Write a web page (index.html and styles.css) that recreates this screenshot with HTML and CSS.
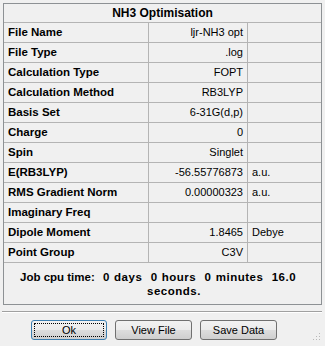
FILE: index.html
```html
<!DOCTYPE html>
<html>
<head>
<meta charset="utf-8">
<link rel="stylesheet" href="styles.css">
</head>
<body>
<div class="window">
  <div class="panel">
    <div class="title">NH3 Optimisation</div>
    <div class="row"><div class="label">File Name</div><div class="value">ljr-NH3 opt</div><div class="unit"></div></div>
    <div class="row"><div class="label">File Type</div><div class="value">.log</div><div class="unit"></div></div>
    <div class="row"><div class="label">Calculation Type</div><div class="value">FOPT</div><div class="unit"></div></div>
    <div class="row"><div class="label">Calculation Method</div><div class="value">RB3LYP</div><div class="unit"></div></div>
    <div class="row"><div class="label">Basis Set</div><div class="value">6-31G(d,p)</div><div class="unit"></div></div>
    <div class="row"><div class="label">Charge</div><div class="value">0</div><div class="unit"></div></div>
    <div class="row"><div class="label">Spin</div><div class="value">Singlet</div><div class="unit"></div></div>
    <div class="row"><div class="label">E(RB3LYP)</div><div class="value">-56.55776873</div><div class="unit">a.u.</div></div>
    <div class="row"><div class="label">RMS Gradient Norm</div><div class="value">0.00000323</div><div class="unit">a.u.</div></div>
    <div class="row"><div class="label">Imaginary Freq</div><div class="value"></div><div class="unit"></div></div>
    <div class="row"><div class="label">Dipole Moment</div><div class="value">1.8465</div><div class="unit">Debye</div></div>
    <div class="row"><div class="label">Point Group</div><div class="value">C3V</div><div class="unit"></div></div>
    <div class="cpu">
      <div class="cpu-label">Job cpu time:</div>
      <div class="cpu-value">
        <div class="cpu-line">0 days  0 hours  0 minutes  16.0</div>
        <div class="cpu-line second">seconds.</div>
      </div>
    </div>
  </div>
  <div class="separator"></div>
  <div class="buttons">
    <button class="btn default"><span class="focus">Ok</span></button>
    <button class="btn">View File</button>
    <button class="btn">Save Data</button>
  </div>
  <svg class="grip" width="8" height="8" viewBox="0 0 8 8">
    <rect x="6" y="0" width="1" height="1" fill="#b8b8b8"/>
    <rect x="3" y="3" width="1" height="1" fill="#b8b8b8"/>
    <rect x="6" y="3" width="1" height="1" fill="#b8b8b8"/>
    <rect x="0" y="6" width="1" height="1" fill="#b8b8b8"/>
    <rect x="3" y="6" width="1" height="1" fill="#b8b8b8"/>
    <rect x="6" y="6" width="1" height="1" fill="#b8b8b8"/>
  </svg>
</div>
</body>
</html>
```
FILE: styles.css
```css
html, body {
  margin: 0;
  padding: 0;
  background: #f0f0f0;
}
body {
  font-family: "Liberation Sans", Arial, sans-serif;
  font-size: 11px;
  color: #000;
}
.window {
  position: relative;
  width: 325px;
  height: 346px;
  padding-top: 3px;
  box-sizing: border-box;
}
.panel {
  margin-left: 3px;
  width: 319px;
  border: 1px solid #8d9194;
  box-sizing: border-box;
}
.title {
  height: 18px;
  line-height: 18px;
  text-align: center;
  font-weight: bold;
  font-size: 12px;
  border-bottom: 1px solid #b4b4b4;
}
.row {
  display: flex;
  height: 20px;
  border-bottom: 1px solid #b4b4b4;
  box-sizing: border-box;
  line-height: 19px;
}
.label {
  width: 145px;
  border-right: 1px solid #b4b4b4;
  box-sizing: border-box;
  padding-left: 4px;
  font-weight: bold;
  font-size: 11.5px;
}
.value {
  width: 99px;
  border-right: 1px solid #b4b4b4;
  box-sizing: border-box;
  padding-right: 4px;
  text-align: right;
}
.unit {
  flex: 1;
  padding-left: 4px;
}
.cpu {
  display: flex;
  height: 41px;
  padding-top: 7px;
  box-sizing: border-box;
  font-weight: bold;
  font-size: 11.5px;
  line-height: 14px;
}
.cpu-label {
  margin-left: 16px;
  width: 83px;
}
.cpu-line {
  white-space: pre;
  letter-spacing: 0.5px;
  word-spacing: 0.5px;
}
.cpu-line.second {
  padding-left: 44px;
}
.separator {
  margin: 6px 0 0 2px;
  width: 320px;
  height: 1px;
  border-top: 1px solid #a0a0a0;
  background: #fff;
}
.buttons {
  display: flex;
  gap: 8px;
  margin: 7px 0 0 31px;
}
.btn {
  width: 77px;
  height: 20px;
  padding: 0;
  font-family: "Liberation Sans", Arial, sans-serif;
  font-size: 11px;
  color: #000;
  border: 1px solid #707070;
  border-radius: 3px;
  background: linear-gradient(#f2f2f2 0%, #ebebeb 50%, #dddddd 51%, #cfcfcf 100%);
}
.btn.default {
  width: 76px;
  border-color: #3c7fb1;
  padding: 2px;
}
.focus {
  display: block;
  height: 100%;
  box-sizing: border-box;
  border: 1px dotted #000;
  line-height: 12px;
}
.grip {
  position: absolute;
  right: 4px;
  bottom: 5px;
}
```
